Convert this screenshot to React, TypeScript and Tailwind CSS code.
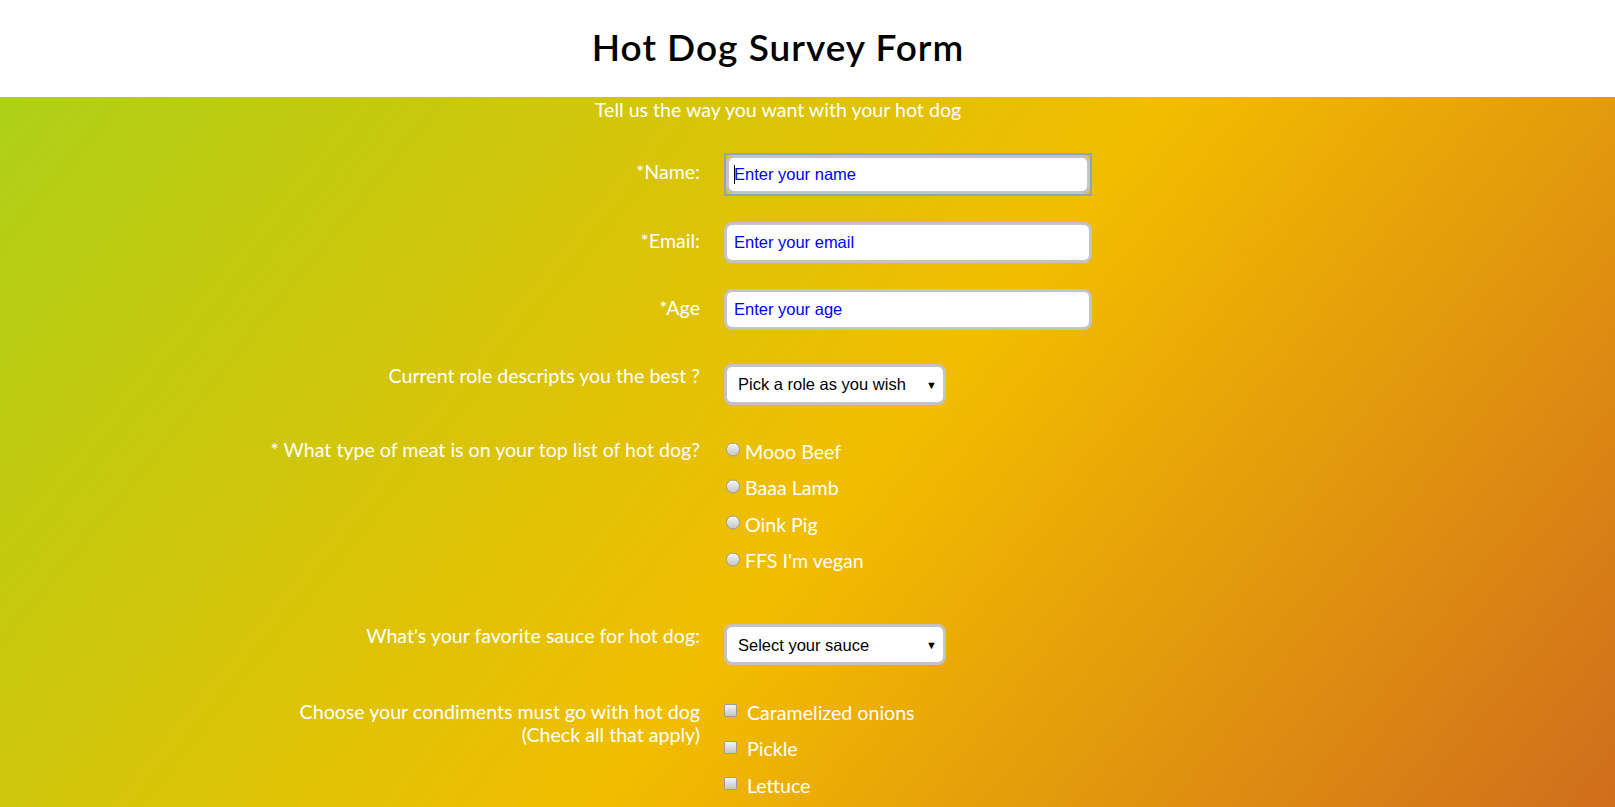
import React from 'react';

const lato = "font-['Lato','Open_Sans',sans-serif]";
const arial = "font-['Liberation_Sans',Arial,sans-serif]";

const Radio = ({ label }: { label: string }) => {
  return (
    <label className="flex h-[36.6px] items-center">
      <span className="ml-[2px] mr-[5px] inline-block h-[14px] w-[14px] -translate-y-[1.5px] rounded-full border border-[#9c9c9c] bg-[linear-gradient(#f4f4f4,#c6c6c6)] shadow-[inset_0_1px_1px_rgba(255,255,255,0.8)]" />
      <span>{label}</span>
    </label>
  );
};

const Check = ({ label }: { label: string }) => {
  return (
    <label className="flex h-[36.5px] items-center">
      <span className="mr-[10px] inline-block h-[13px] w-[13px] -translate-y-[2px] rounded-[2px] border border-[#9c9c9c] bg-[linear-gradient(#f4f4f4,#c6c6c6)]" />
      <span>{label}</span>
    </label>
  );
};

const SelectBox = ({ text }: { text: string }) => {
  return (
    <div className="relative h-[41px] w-[222px]">
      <select
        className={`h-full w-full appearance-none rounded-[8px] border-[3px] border-[#c3c3c3] bg-white pl-[11px] text-[16.5px] text-black ${arial}`}
        defaultValue=""
      >
        <option value="">{text}</option>
      </select>
      <span className="pointer-events-none absolute right-[9px] top-1/2 -translate-y-1/2 text-[11px] text-black">▼</span>
    </div>
  );
};

const Row = ({
  label,
  className,
  labelClass,
  children,
}: {
  label: React.ReactNode;
  className: string;
  labelClass: string;
  children: React.ReactNode;
}) => {
  return (
    <div className={`flex items-start gap-6 ${className}`}>
      <div className={`w-[472px] shrink-0 text-right ${labelClass}`}>{label}</div>
      <div>{children}</div>
    </div>
  );
};

const App = () => {
  const inputCls = `h-[41px] w-[368px] rounded-[8px] border-[3px] border-[#c3c3c3] bg-white px-[7px] text-[16.5px] outline-none placeholder:text-[#0000ff] ${arial}`;

  return (
    <div className={`min-h-screen ${lato}`}>
      <header className="flex h-[97px] items-center justify-center bg-white pr-[59px]">
        <h1 className="-mt-[4px] text-[37px] font-semibold tracking-[1px] text-black">Hot Dog Survey Form</h1>
      </header>

      <section className="min-h-[710px] bg-[linear-gradient(129deg,#acd118_2%,#f2bd00_55%,#d06d1d_100%)] bg-fixed pb-10 pr-[59px] text-[19.6px] text-white">
        <p className="pt-px text-center leading-6">Tell us the way you want with your hot dog</p>

        <form className="mx-auto w-[1100px]">
          <Row label="*Name:" className="mt-[31px]" labelClass="pt-[7px] leading-6">
            <div className="relative h-[43px] w-[368px] border-2 border-[#8ca4bd]">
              <input type="text" placeholder="Enter your name" className={`${inputCls} !h-full !w-full !px-[5px]`} />
              <span className="absolute left-[8px] top-[10px] h-[19px] w-px bg-black" />
            </div>
          </Row>

          <Row label="*Email:" className="mt-[26px]" labelClass="pt-[7px] leading-6">
            <input type="email" placeholder="Enter your email" className={inputCls} />
          </Row>

          <Row label="*Age" className="mt-[26px]" labelClass="pt-[7px] leading-6">
            <input type="number" placeholder="Enter your age" className={inputCls} />
          </Row>

          <Row label="Current role descripts you the best ?" className="mt-[34px]" labelClass="leading-6">
            <SelectBox text="Pick a role as you wish" />
          </Row>

          <Row label="* What type of meat is on your top list of hot dog?" className="mt-[28px]" labelClass="pt-[5px] leading-6">
            <Radio label="Mooo Beef" />
            <Radio label="Baaa Lamb" />
            <Radio label="Oink Pig" />
            <Radio label="FFS I'm vegan" />
          </Row>

          <Row label="What's your favorite sauce for hot dog:" className="mt-[45px]" labelClass="leading-6">
            <SelectBox text="Select your sauce" />
          </Row>

          <Row
            label={
              <>
                Choose your condiments must go with hot dog
                <br />
                (Check all that apply)
              </>
            }
            className="mt-[29px]"
            labelClass="pt-[6px] leading-[23px]"
          >
            <Check label="Caramelized onions" />
            <Check label="Pickle" />
            <Check label="Lettuce" />
          </Row>
        </form>
      </section>
    </div>
  );
};

export default App;
